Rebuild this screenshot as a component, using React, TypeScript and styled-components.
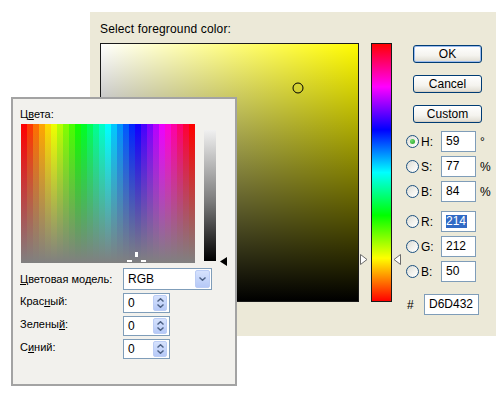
import React from "react";
import styled, { createGlobalStyle } from "styled-components";

const Global = createGlobalStyle`
  html, body { margin: 0; padding: 0; background: #fff; }
  body {
    font-family: "Liberation Sans", Arial, sans-serif;
    font-size: 12px;
    color: #000;
  }
`;

const Desktop = styled.div`
  position: relative;
  width: 500px;
  height: 400px;
  overflow: hidden;
  background: #fff;
  box-sizing: border-box;
  padding: 12px 0 0 90px;
`;

/* ---------- back dialog ---------- */

const Dialog = styled.div`
  width: 406px;
  height: 324px;
  box-sizing: border-box;
  background: #ece9d8;
  padding: 10px 0 0 10px;
  display: flex;
  flex-direction: column;
`;

const Title = styled.div`
  height: 14px;
  line-height: 14px;
  margin-bottom: 7px;
  letter-spacing: 0.15px;
`;

const Body = styled.div`
  display: flex;
  align-items: flex-start;
`;

const ColorField = styled.div<{ $hue: number }>`
  position: relative;
  width: 257px;
  height: 257px;
  border: 1px solid #1a1a1a;
  background: linear-gradient(to top, #000, rgba(0, 0, 0, 0)),
    linear-gradient(to right, #fff, hsl(${(p) => p.$hue}, 100%, 50%));
`;

const FieldMarker = styled.div`
  position: absolute;
  width: 9px;
  height: 9px;
  border: 1px solid #000;
  border-radius: 50%;
  transform: translate(-50%, -50%);
`;

const HueColumn = styled.div`
  position: relative;
  width: 40px;
  height: 259px;
  margin-left: 1px;
`;

const HueBar = styled.div`
  width: 19px;
  height: 257px;
  margin-left: 11px;
  border: 1px solid #1a1a1a;
  background: linear-gradient(
    to bottom,
    #ff0000 0%,
    #ff00ff 16.67%,
    #0000ff 33.33%,
    #00ffff 50%,
    #00ff00 66.67%,
    #ffff00 83.33%,
    #ff0000 100%
  );
`;

const HueArrow = styled.svg<{ $side: "left" | "right" }>`
  position: absolute;
  top: 211px;
  ${(p) => (p.$side === "left" ? "left: 0;" : "left: 33px;")}
`;

const Controls = styled.div`
  display: flex;
  flex-direction: column;
  width: 91px;
  margin-left: 5px;
`;

const ButtonStack = styled.div`
  display: flex;
  flex-direction: column;
  gap: 12px;
  margin: 2px 0 0 8px;
`;

const Button = styled.button<{ $default?: boolean }>`
  box-sizing: border-box;
  width: 69px;
  height: 18px;
  padding: 0;
  border: 1px solid #003c74;
  border-radius: 3px;
  font-family: "Liberation Sans", Arial, sans-serif;
  font-size: 12px;
  line-height: 16px;
  color: #000;
  background: linear-gradient(to bottom, #ffffff 0%, #f4f3ee 60%, #dedbd0 100%);
  box-shadow: ${(p) =>
    p.$default ? "inset 0 0 0 1px #9cbcee" : "inset 0 -1px 0 #d6d0c5"};
`;

const Fields = styled.div`
  display: flex;
  flex-direction: column;
  margin-top: 8px;
`;

const FieldRow = styled.div<{ $gap: number }>`
  display: flex;
  align-items: center;
  height: 21px;
  margin-top: ${(p) => p.$gap}px;
`;

const Radio = styled.span<{ $checked?: boolean }>`
  position: relative;
  box-sizing: border-box;
  width: 13px;
  height: 13px;
  margin-left: 1px;
  border: 1px solid #1c5180;
  border-radius: 50%;
  background: linear-gradient(135deg, #dcdcd5 0%, #f4f4f0 60%, #ffffff 100%);
  flex: none;
  &::after {
    content: "";
    display: ${(p) => (p.$checked ? "block" : "none")};
    position: absolute;
    left: 3px;
    top: 3px;
    width: 5px;
    height: 5px;
    border-radius: 50%;
    background: radial-gradient(circle at 35% 35%, #6fdc6f, #21a121);
  }
`;

const FieldLabel = styled.span<{ $w: number; $ml?: number }>`
  width: ${(p) => p.$w}px;
  margin-left: ${(p) => p.$ml ?? 2}px;
  line-height: 14px;
`;

const ValueBox = styled.div<{ $w: number }>`
  box-sizing: border-box;
  width: ${(p) => p.$w}px;
  height: 21px;
  border: 1px solid #7f9db9;
  background: #fff;
  padding-left: 4px;
  line-height: 19px;
  white-space: nowrap;
`;

const Selected = styled.span`
  display: inline-block;
  background: #316ac5;
  color: #fff;
  line-height: 13px;
  padding-right: 1px;
`;

const Unit = styled.span`
  margin-left: 4px;
  line-height: 14px;
`;

/* ---------- front panel (Windows colour dialog) ---------- */

const Panel = styled.div`
  position: absolute;
  left: 11px;
  top: 97px;
  width: 226px;
  height: 289px;
  box-sizing: border-box;
  border: 2px solid #a3a3a3;
  background: #f2f1ed;
  padding: 8px 0 0 7px;
  display: flex;
  flex-direction: column;
  font-size: 11px;
`;

const PanelLabel = styled.div`
  height: 14px;
  line-height: 14px;
`;

const SpectrumRow = styled.div`
  display: flex;
  align-items: flex-start;
  margin-top: 3px;
  margin-left: 1px;
`;

const Spectrum = styled.div`
  position: relative;
  display: flex;
  width: 174px;
  height: 139px;
  overflow: hidden;
`;

const SpectrumColumn = styled.div`
  flex: 1;
  height: 100%;
`;

const Crosshair = styled.svg`
  position: absolute;
  left: 105px;
  top: 128px;
`;

const LumWrap = styled.div`
  position: relative;
  margin: 6px 0 0 9px;
  width: 23px;
  height: 133px;
`;

const LumBar = styled.div`
  width: 12px;
  height: 131px;
  background: linear-gradient(to bottom, #f0f0f0 0%, #7a7a7a 55%, #000 100%);
`;

const LumArrow = styled.svg`
  position: absolute;
  left: 16px;
  top: 127px;
`;

const Form = styled.div`
  display: grid;
  grid-template-columns: 103px auto;
  row-gap: 3px;
  align-items: start;
  justify-items: start;
  margin-top: 5px;
`;

const FormLabel = styled.div<{ $pt: number }>`
  line-height: 14px;
  padding-top: ${(p) => p.$pt}px;
  white-space: nowrap;
`;

const Mnemonic = styled.span`
  text-decoration: underline;
`;

const SelectBox = styled.div`
  position: relative;
  box-sizing: border-box;
  width: 89px;
  height: 22px;
  border: 1px solid #7f9db9;
  background: #fff;
  padding-left: 4px;
  line-height: 20px;
  font-size: 12px;
`;

const DropButton = styled.div`
  position: absolute;
  right: 1px;
  top: 1px;
  width: 15px;
  height: 18px;
  box-sizing: border-box;
  border: 1px solid #bccdf5;
  border-radius: 2px;
  background: linear-gradient(to bottom, #d6e2fd, #b6c9f7);
  display: flex;
  align-items: center;
  justify-content: center;
`;

const SpinBox = styled.div`
  position: relative;
  box-sizing: border-box;
  width: 47px;
  height: 20px;
  border: 1px solid #7f9db9;
  background: #fff;
  padding-left: 4px;
  line-height: 18px;
  font-size: 12px;
`;

const SpinButtons = styled.div`
  position: absolute;
  right: 2px;
  top: 1px;
  width: 14px;
  height: 16px;
  box-sizing: border-box;
  border: 1px solid #bccdf5;
  border-radius: 2px;
  background: linear-gradient(to bottom, #d6e2fd, #b6c9f7);
  display: flex;
  flex-direction: column;
  align-items: center;
  justify-content: space-evenly;
`;

const Chevron = ({ up }: { up?: boolean }) => (
  <svg width="7" height="4" viewBox="0 0 7 4">
    <path
      d={up ? "M0.5 3.5 L3.5 0.7 L6.5 3.5" : "M0.5 0.5 L3.5 3.3 L6.5 0.5"}
      fill="none"
      stroke="#4d6185"
      strokeWidth="1.4"
    />
  </svg>
);

const hsbRows = [
  { key: "H", value: "59", unit: "°", checked: true, gap: 0 },
  { key: "S", value: "77", unit: "%", gap: 4 },
  { key: "B", value: "84", unit: "%", gap: 4 },
  { key: "R", value: "214", selected: true, gap: 9 },
  { key: "G", value: "212", gap: 4 },
  { key: "B", value: "50", gap: 4 },
];

const spectrumHues = Array.from({ length: 29 }, (_, i) => Math.round((i * 360) / 28));

export default function App() {
  return (
    <>
      <Global />
      <Desktop>
        <Dialog>
          <Title>Select foreground color:</Title>
          <Body>
            <ColorField $hue={59}>
              <FieldMarker style={{ left: 197, top: 44 }} />
            </ColorField>
            <HueColumn>
              <HueBar />
              <HueArrow $side="left" width="8" height="11" viewBox="0 0 8 11">
                <path d="M0.5 0.5 L7 5.5 L0.5 10.5 Z" fill="#fff" stroke="#6b6b6b" />
              </HueArrow>
              <HueArrow $side="right" width="8" height="11" viewBox="0 0 8 11">
                <path d="M7.5 0.5 L1 5.5 L7.5 10.5 Z" fill="#fff" stroke="#6b6b6b" />
              </HueArrow>
            </HueColumn>
            <Controls>
              <ButtonStack>
                <Button $default>OK</Button>
                <Button>Cancel</Button>
                <Button>Custom</Button>
              </ButtonStack>
              <Fields>
                {hsbRows.map((r, i) => (
                  <FieldRow key={i} $gap={r.gap}>
                    <Radio $checked={r.checked} />
                    <FieldLabel $w={20}>{r.key}:</FieldLabel>
                    <ValueBox $w={35}>
                      {r.selected ? <Selected>{r.value}</Selected> : r.value}
                    </ValueBox>
                    {r.unit && <Unit>{r.unit}</Unit>}
                  </FieldRow>
                ))}
                <FieldRow $gap={12}>
                  <FieldLabel $w={17} $ml={2}>#</FieldLabel>
                  <ValueBox $w={55}>D6D432</ValueBox>
                </FieldRow>
              </Fields>
            </Controls>
          </Body>
        </Dialog>

        <Panel>
          <PanelLabel>
            Ц<Mnemonic>в</Mnemonic>ета:
          </PanelLabel>
          <SpectrumRow>
            <Spectrum>
              {spectrumHues.map((h, i) => (
                <SpectrumColumn
                  key={i}
                  style={{
                    background: `linear-gradient(to bottom, hsl(${h}, 100%, 50%), #808080)`,
                  }}
                />
              ))}
              <Crosshair width="21" height="14" viewBox="0 0 21 14">
                <rect x="9" y="0" width="3" height="5" fill="#fff" />
                <rect x="1" y="8" width="5" height="2" fill="#fff" />
                <rect x="15" y="8" width="5" height="2" fill="#fff" />
              </Crosshair>
            </Spectrum>
            <LumWrap>
              <LumBar />
              <LumArrow width="7" height="9" viewBox="0 0 7 9">
                <path d="M0 4.5 L7 0 L7 9 Z" fill="#000" />
              </LumArrow>
            </LumWrap>
          </SpectrumRow>
          <Form>
            <FormLabel $pt={4}>
              <Mnemonic>Ц</Mnemonic>ветовая модель:
            </FormLabel>
            <SelectBox>
              RGB
              <DropButton>
                <Chevron />
              </DropButton>
            </SelectBox>
            <FormLabel $pt={1}>
              Крас<Mnemonic>н</Mnemonic>ый:
            </FormLabel>
            <SpinBox>
              0
              <SpinButtons>
                <Chevron up />
                <Chevron />
              </SpinButtons>
            </SpinBox>
            <FormLabel $pt={1}>
              Зелены<Mnemonic>й</Mnemonic>:
            </FormLabel>
            <SpinBox>
              0
              <SpinButtons>
                <Chevron up />
                <Chevron />
              </SpinButtons>
            </SpinBox>
            <FormLabel $pt={1}>
              С<Mnemonic>и</Mnemonic>ний:
            </FormLabel>
            <SpinBox>
              0
              <SpinButtons>
                <Chevron up />
                <Chevron />
              </SpinButtons>
            </SpinBox>
          </Form>
        </Panel>
      </Desktop>
    </>
  );
}
